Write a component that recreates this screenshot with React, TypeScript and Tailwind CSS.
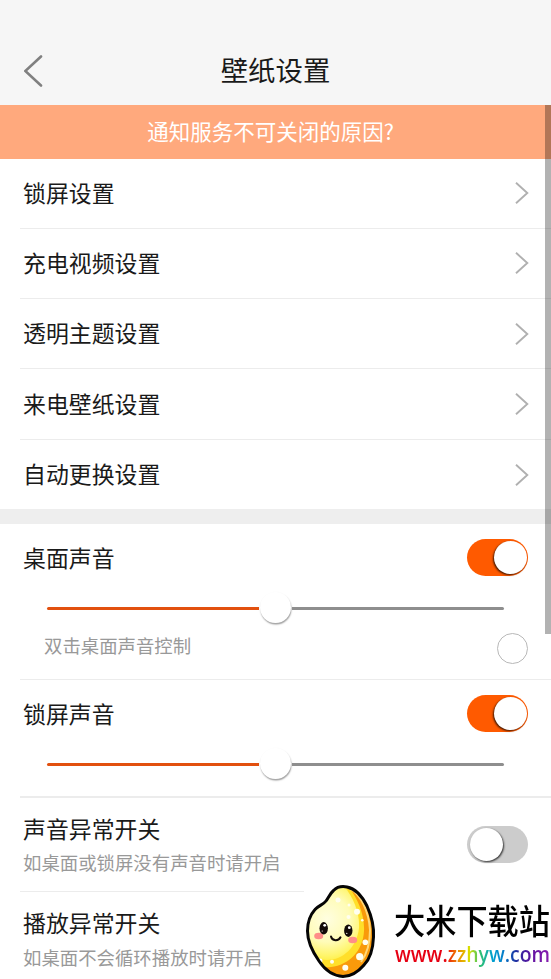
import React from "react";

const links = ["锁屏设置", "充电视频设置", "透明主题设置", "来电壁纸设置", "自动更换设置"];

function Toggle({ on }: { on?: boolean }) {
  return (
    <div className={on ? "flex h-[37px] w-[61px] items-center justify-end rounded-full bg-[#ff5a00] px-[1.5px]" : "flex h-[37px] w-[61px] items-center rounded-full bg-[#cccccc] px-[2.5px]"}>
      <div className={on ? "size-[33px] rounded-full bg-white shadow-[-1px_1px_2px_rgba(0,0,0,0.75)]" : "size-[33px] rounded-full bg-white shadow-[1px_1px_2px_rgba(0,0,0,0.75)]"} />
    </div>
  );
}

function Slider() {
  return (
    <div className="ml-[47px] flex h-[33px] w-[457px] items-center">
      <div className="h-[3px] w-[212px] rounded-l-full bg-[#e2500f]" />
      <div className="mx-px mb-[3px] size-[31px] rounded-full bg-white shadow-[0.5px_1.5px_1.5px_rgba(0,0,0,0.38)]" />
      <div className="h-[3px] flex-1 rounded-r-full bg-[#8e8e8e]" />
    </div>
  );
}

function SoundHeader({ title }: { title: string }) {
  return (
    <div className="flex h-[37px] items-center justify-between pr-[23px] pl-[23px]">
      <span className="pb-px text-[22.9px]">{title}</span>
      <Toggle on />
    </div>
  );
}

function LinkRow({ title, last }: { title: string; last: boolean }) {
  return (
    <div className="pl-5">
      <div className={last ? "flex h-[70px] items-center justify-between pr-[22px] pl-[3px]" : "flex h-[70.3px] items-center justify-between border-b-[1.5px] border-[#ececec] pr-[22px] pl-[3px]"}>
        <span className="pb-[2px] text-[22.9px]">{title}</span>
        <svg width="14" height="22" viewBox="0 0 14 22" fill="none" stroke="#b0b0b0" strokeWidth="1.9">
          <path d="M1 .8 12.3 11 1 21.2" />
        </svg>
      </div>
    </div>
  );
}

const body = "M21 18C23.500 14.500 25 10.500 28.500 7.500 32 4 37 3 42 4c8 1.500 15 9 20 19 5 11 7 22 6.500 31C68 66 66 75 59 82c-6 7-13 11.500-21 11.500C28 93 20 87 14 78 7 68 2.500 58 2.500 48 2.500 40 5 32 10 26.500c3-3.500 8.500-5 11-8.500Z";

function RiceMascot() {
  return (
    <svg width="72" height="96" viewBox="0 0 72 96" fill="none">
      <defs>
        <radialGradient id="rice" gradientUnits="userSpaceOnUse" cx="22" cy="36" r="46">
          <stop offset="0" stopColor="#fffee0" />
          <stop offset="0.5" stopColor="#fffcb8" />
          <stop offset="0.8" stopColor="#fff56a" />
          <stop offset="1" stopColor="#ffea30" />
        </radialGradient>
        <clipPath id="body">
          <path d={body} />
        </clipPath>
      </defs>
      <g clipPath="url(#body)">
        <path d="M0 0h72v96H0z" fill="#f99a0b" />
        <path d="M0 0h40c12 12 20 32 19 48C58 68 44 82 26 84 16 85 8 82 0 70Z" fill="#ffdf2a" />
        <path d="M0 0h36c12 12 19 30 18 45C52 64 38 77 22 77 12 77 6 72 0 64Z" fill="url(#rice)" />
        <path d="M44 5c12 6 20 24 21 42 0 14-3 24-9 32" stroke="#ffd878" strokeWidth="2" />
        <g fill="#fffef0">
          <circle cx="52" cy="28.700" r="3" />
          <circle cx="43.500" cy="34" r="2" />
          <circle cx="57.300" cy="37.300" r="1.300" />
          <circle cx="60.300" cy="59.300" r="2.800" />
          <circle cx="54.700" cy="73.700" r="3.600" />
          <circle cx="40.300" cy="84.700" r="3" />
          <circle cx="27" cy="78.700" r="2" />
          <circle cx="15.300" cy="77.700" r="2.200" />
          <circle cx="33" cy="17" r="2.500" />
          <circle cx="44" cy="22" r="1.500" />
        </g>
      </g>
      <path d={body} stroke="#050505" strokeWidth="3" strokeLinejoin="round" />
      <ellipse cx="13.700" cy="53" rx="4.500" ry="3.200" fill="#ff8d88" />
      <ellipse cx="47.700" cy="57" rx="4.500" ry="3.200" fill="#ff8d88" />
      <ellipse cx="18.700" cy="45.300" rx="4.200" ry="6.200" fill="#120a08" />
      <ellipse cx="43.300" cy="47.700" rx="4.200" ry="6.200" fill="#120a08" />
      <circle cx="19.700" cy="42.300" r="1.400" fill="#fff" />
      <circle cx="44.300" cy="44.700" r="1.400" fill="#fff" />
      <circle cx="17.200" cy="48" r=".6" fill="#fff" />
      <circle cx="41.800" cy="50.400" r=".6" fill="#fff" />
      <path d="M26 53.500c1 4.500 7.500 5 9.500.8" stroke="#120a08" strokeWidth="2" strokeLinecap="round" />
    </svg>
  );
}

export default function App() {
  return (
    <div className="relative flex h-[979px] w-[551px] flex-col overflow-hidden bg-white font-['Noto_Sans_CJK_SC',sans-serif] leading-none text-[#1a1a1a]">
      <header className="grid h-[105px] shrink-0 grid-cols-[1fr_auto_1fr] items-center bg-[#f6f6f6] pt-9">
        <svg className="ml-6" width="20" height="34" viewBox="0 0 20 34" fill="none" stroke="#808080" strokeWidth="2.6" strokeLinecap="round">
          <path d="M17 2.500 1.300 17 17 31.500" />
        </svg>
        <h1 className="pb-[2px] text-[27.4px]">壁纸设置</h1>
      </header>
      <div className="flex h-[53.500px] shrink-0 items-center justify-center bg-[#ffa97d] pr-[10px] pb-[2px] text-[21.500px] text-white">
        <span>通知服务不可关闭的原因?</span>
      </div>

      <nav className="h-[350.500px] shrink-0">
        {links.map((title, i) => (
          <LinkRow key={title} title={title} last={i === links.length - 1} />
        ))}
      </nav>
      <div className="h-[15px] shrink-0 bg-[#eeeeee]" />

      <section className="h-[156px] shrink-0 pt-[15px]">
        <SoundHeader title="桌面声音" />
        <div className="pt-[16px]">
          <Slider />
        </div>
        <div className="mt-[8px] flex h-[30px] items-center justify-between pr-[23px] pl-[44px]">
          <span className="pb-[6px] text-[18.4px] text-[#999999]">双击桌面声音控制</span>
          <div className="size-[31px] rounded-full border-[1.5px] border-[#b8b8b8]" />
        </div>
        <div className="mt-[15.500px] ml-5 h-[1.500px] bg-[#ececec]" />
      </section>

      <section className="h-[117.500px] shrink-0 pt-[15px]">
        <SoundHeader title="锁屏声音" />
        <div className="pt-[16px]">
          <Slider />
        </div>
        <div className="mt-[15px] ml-5 h-[1.500px] bg-[#ececec]" />
      </section>

      <section className="ml-5 flex h-[94px] shrink-0 items-center justify-between border-b border-[#ececec] pr-[23px] pl-[3px]">
        <div className="flex flex-col gap-[13px] pt-px">
          <span className="text-[22.9px]">声音异常开关</span>
          <span className="text-[18.4px] text-[#999999]">如桌面或锁屏没有声音时请开启</span>
        </div>
        <Toggle />
      </section>
      <section className="ml-5 flex h-[94px] shrink-0 items-center pl-[3px]">
        <div className="flex flex-col gap-[14px]">
          <span className="text-[22.9px]">播放异常开关</span>
          <span className="text-[18.4px] text-[#999999]">如桌面不会循环播放时请开启</span>
        </div>
      </section>

      {/* scrollbar */}
      <div className="absolute top-[105px] right-0 h-[529px] w-[6px] bg-black/30" />

      {/* site badge */}
      <div className="absolute right-0 bottom-0 flex h-[97px] w-[247px] items-start bg-white pl-px">
        <div className="pt-[1px]">
          <RiceMascot />
        </div>
        <div className="ml-[17px] flex flex-col items-start pt-[21px] whitespace-nowrap">
          <span className="h-[31px] origin-top-left scale-y-[1.08] text-[31.2px] leading-[31px] font-medium text-black">大米下载站</span>
          <span className="mt-[8px] ml-px h-[26px] origin-bottom scale-y-[1.08] bg-[linear-gradient(90deg,#e60012_32%,#f08000_40%,#d8e000_48%,#30c070_55%,#00a0d0_63%,#0878c8_71%,#2030a0_78%,#6010a0_88%,#8a20b0)] bg-clip-text font-['Open_Sans',sans-serif] text-[19.4px] leading-[26px] font-semibold text-transparent">www.zzhyw.com</span>
        </div>
      </div>
    </div>
  );
}
